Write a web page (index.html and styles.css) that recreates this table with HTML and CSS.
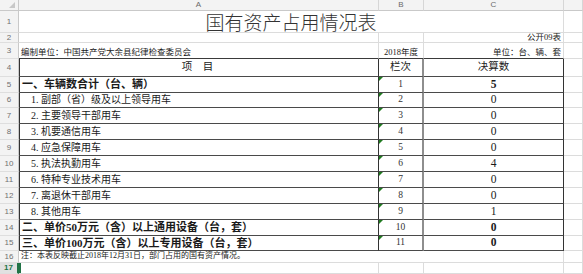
FILE: index.html
```html
<!DOCTYPE html>
<html lang="zh-CN">
<head>
<meta charset="utf-8">
<title>国有资产占用情况表</title>
<link rel="stylesheet" href="styles.css">
</head>
<body>
<div class="sheet">
  <div class="row h-hdr">
    <div class="rh corner"><span class="tri"></span></div>
    <div class="ch">A</div>
    <div class="ch">B</div>
    <div class="ch">C</div>
    <div class="ch"></div>
  </div>
  <div class="row h-22">
    <div class="rh">1</div>
    <div class="c span3 title">国有资产占用情况表</div>
    <div class="c"></div>
  </div>
  <div class="row h-10">
    <div class="rh">2</div>
    <div class="c"></div>
    <div class="c"></div>
    <div class="c small right">公开09表</div>
    <div class="c"></div>
  </div>
  <div class="row h-16">
    <div class="rh">3</div>
    <div class="c small bottom top-tbl">编制单位：中国共产党大余县纪律检查委员会</div>
    <div class="c small bottom center top-tbl">2018年度</div>
    <div class="c small bottom right top-tbl">单位：台、辆、套</div>
    <div class="c"></div>
  </div>
  <div class="row h-18">
    <div class="rh">4</div>
    <div class="c ta head center">项　目</div>
    <div class="c tb head center">栏次</div>
    <div class="c tc head center">决算数</div>
    <div class="c"></div>
  </div>
  <div class="row h-16">
    <div class="rh">5</div>
    <div class="c ta big">一、车辆数合计（台、辆）</div>
    <div class="c tb num">1</div>
    <div class="c tc val strong">5</div>
    <div class="c"></div>
  </div>
  <div class="row h-15">
    <div class="rh">6</div>
    <div class="c ta sub">1. 副部（省）级及以上领导用车</div>
    <div class="c tb num">2</div>
    <div class="c tc val">0</div>
    <div class="c"></div>
  </div>
  <div class="row h-16">
    <div class="rh">7</div>
    <div class="c ta sub">2. 主要领导干部用车</div>
    <div class="c tb num">3</div>
    <div class="c tc val">0</div>
    <div class="c"></div>
  </div>
  <div class="row h-16">
    <div class="rh">8</div>
    <div class="c ta sub">3. 机要通信用车</div>
    <div class="c tb num">4</div>
    <div class="c tc val">0</div>
    <div class="c"></div>
  </div>
  <div class="row h-16">
    <div class="rh">9</div>
    <div class="c ta sub">4. 应急保障用车</div>
    <div class="c tb num">5</div>
    <div class="c tc val">0</div>
    <div class="c"></div>
  </div>
  <div class="row h-16">
    <div class="rh">10</div>
    <div class="c ta sub">5. 执法执勤用车</div>
    <div class="c tb num">6</div>
    <div class="c tc val">4</div>
    <div class="c"></div>
  </div>
  <div class="row h-16">
    <div class="rh">11</div>
    <div class="c ta sub">6. 特种专业技术用车</div>
    <div class="c tb num">7</div>
    <div class="c tc val">0</div>
    <div class="c"></div>
  </div>
  <div class="row h-16">
    <div class="rh">12</div>
    <div class="c ta sub">7. 离退休干部用车</div>
    <div class="c tb num">8</div>
    <div class="c tc val">0</div>
    <div class="c"></div>
  </div>
  <div class="row h-16">
    <div class="rh">13</div>
    <div class="c ta sub">8. 其他用车</div>
    <div class="c tb num">9</div>
    <div class="c tc val">1</div>
    <div class="c"></div>
  </div>
  <div class="row h-16">
    <div class="rh">14</div>
    <div class="c ta big">二、单价50万元（含）以上通用设备（台，套）</div>
    <div class="c tb num">10</div>
    <div class="c tc val strong">0</div>
    <div class="c"></div>
  </div>
  <div class="row h-15">
    <div class="rh">15</div>
    <div class="c ta big">三、单价100万元（含）以上专用设备（台，套）</div>
    <div class="c tb num">11</div>
    <div class="c tc val strong">0</div>
    <div class="c"></div>
  </div>
  <div class="row h-12">
    <div class="rh">16</div>
    <div class="c span3 note">注：本表反映截止2018年12月31日，部门占用的国有资产情况。</div>
    <div class="c"></div>
  </div>
  <div class="row h-11">
    <div class="rh active">17</div>
    <div class="c sel"></div>
    <div class="c"></div>
    <div class="c"></div>
    <div class="c"></div>
  </div>
</div>
</body>
</html>
```
FILE: styles.css
```css
html, body {
  margin: 0;
  padding: 0;
  background: #ffffff;
}

.sheet {
  width: 583px;
  height: 274px;
  overflow: hidden;
  font-family: "Liberation Serif", "Noto Sans CJK SC", serif;
  color: #1a1a1a;
}

.row {
  display: grid;
  grid-template-columns: 19px 360px 45px 140px 19px;
}

.h-hdr { height: 11px; }
.h-22 { height: 22px; }
.h-10 { height: 10px; }
.h-11 { height: 11px; }
.h-12 { height: 12px; }
.h-15 { height: 15px; }
.h-16 { height: 16px; }
.h-18 { height: 18px; }

.rh {
  box-sizing: border-box;
  background: #f3f3f3;
  border-right: 1px solid #c9c9c9;
  border-bottom: 1px solid #dedede;
  color: #707070;
  font-family: "Liberation Sans", "Noto Sans", sans-serif;
  font-size: 8px;
  display: flex;
  align-items: center;
  justify-content: center;
  line-height: 1;
}

.corner {
  position: relative;
  border-bottom-color: #c9c9c9;
}

.tri {
  position: absolute;
  right: 3px;
  bottom: 2px;
  width: 0;
  height: 0;
  border-left: 6px solid transparent;
  border-bottom: 6px solid #c8c8c8;
}

.ch {
  box-sizing: border-box;
  background: #f3f3f3;
  border-right: 1px solid #d6d6d6;
  border-bottom: 1px solid #c9c9c9;
  color: #6a6a6a;
  font-family: "Liberation Sans", "Noto Sans", sans-serif;
  font-size: 8px;
  display: flex;
  align-items: center;
  justify-content: center;
  line-height: 1;
}

.rh.active {
  background: #e1e1e1;
  color: #217346;
  border-right: 2px solid #217346;
  font-weight: 700;
}

.c {
  box-sizing: border-box;
  border-right: 1px solid #dcdcdc;
  border-bottom: 1px solid #dcdcdc;
  display: flex;
  align-items: center;
  white-space: nowrap;
  overflow: hidden;
  line-height: 1;
  padding: 0 2px;
}

.span3 { grid-column: span 3; }

.c.title {
  justify-content: center;
  font-family: "Noto Sans CJK SC", sans-serif;
  font-weight: 300;
  font-size: 19px;
  line-height: 20px;
  color: #333333;
  overflow: visible;
  padding-top: 1px;
}

.small {
  font-size: 8.5px;
}

.right { justify-content: flex-end; }
.center { justify-content: center; }
.bottom { align-items: flex-end; padding-bottom: 2px; }

.top-tbl {
  border-bottom: 1px solid #3a3a3a;
}

.ta, .tb, .tc {
  border-bottom: 1px solid #4a4a4a;
}

.ta {
  border-right: 1px solid #333333;
  box-shadow: inset 1px 0 0 #333333;
  padding-left: 3px;
}

.tb {
  position: relative;
  border-right: 2px solid #8e8e8e;
  justify-content: center;
}

.tc {
  border-right: 1px solid #333333;
  justify-content: center;
}

.head {
  font-size: 10.5px;
  color: #222222;
}

.head.ta { padding-left: 0; }

.big {
  font-size: 11px;
  font-weight: 700;
}

.sub {
  font-size: 10px;
  padding-left: 12px;
}

.num {
  font-size: 9.5px;
  color: #333333;
}

.h-16 .tb.num::before,
.h-15 .tb.num::before {
  content: "";
  position: absolute;
  top: 0;
  left: 0;
  width: 0;
  height: 0;
  border-top: 4px solid #1f7a1f;
  border-right: 4px solid transparent;
}

.val {
  font-size: 11.5px;
}

.strong {
  font-weight: 700;
}

.note {
  font-size: 8px;
  align-items: flex-end;
  padding-bottom: 2px;
}

.sel {
  box-shadow: inset 2px 0 0 #217346;
}
```
